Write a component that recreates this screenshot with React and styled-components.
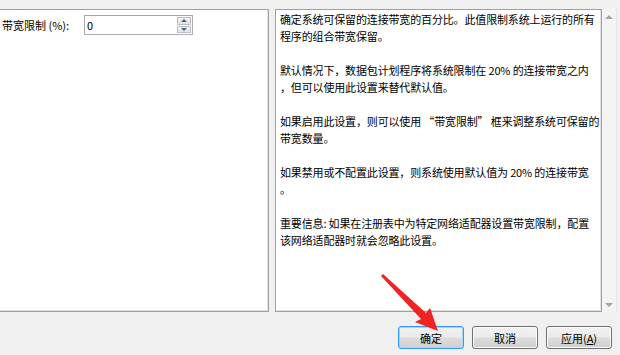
import React from "react";
import styled, { createGlobalStyle } from "styled-components";

const Global = createGlobalStyle`
  html, body { margin: 0; padding: 0; background: #f0f0f0; }
  body { font-family: "Noto Sans CJK SC", "Noto Sans", sans-serif; }
`;

const Page = styled.div`
  position: relative;
  width: 620px;
  height: 355px;
  overflow: hidden;
  background: #f0f0f0;
  display: flex;
  flex-direction: column;
  padding-top: 9px;
  box-sizing: border-box;
  font-size: 11px;
  color: #000;
`;

const Panels = styled.div`
  display: flex;
  gap: 6px;
  height: 303px;
`;

const OptionPanel = styled.div`
  width: 269px;
  box-sizing: border-box;
  background: #fff;
  border: 1px solid #a0a0a0;
  border-left: none;
  box-shadow: inset 0 -1px 0 #e3e3e3, inset -1px 0 0 #e3e3e3;
  padding: 4px 0 0 2px;
`;

const FieldRow = styled.div`
  display: flex;
  align-items: center;
  height: 22px;
`;

const Label = styled.span`
  width: 82px;
  line-height: 14px;
  white-space: nowrap;
`;

const Spin = styled.div`
  width: 109px;
  height: 20px;
  box-sizing: border-box;
  border: 1px solid #abadb3;
  border-top-color: #a8a8a8;
  background: #fff;
  display: flex;
`;

const SpinValue = styled.span`
  flex: 1;
  padding-left: 2px;
  line-height: 18px;
  color: #000;
`;

const SpinButtons = styled.div`
  width: 14px;
  display: flex;
  flex-direction: column;
  gap: 1px;
  padding: 1px 1px 1px 0;
`;

const SpinBtn = styled.div`
  flex: 1;
  background: linear-gradient(#f6f6f6, #e2e2e2);
  border: 1px solid #b8bcc4;
  display: flex;
  align-items: center;
  justify-content: center;
  box-sizing: border-box;
`;

const Tri = styled.span`
  width: 0;
  height: 0;
  border-left: 3px solid transparent;
  border-right: 3px solid transparent;
  ${(p) => (p.$down ? "border-top: 3px solid #4d6185;" : "border-bottom: 3px solid #4d6185;")}
`;

const DescBox = styled.div`
  width: 342px;
  display: flex;
  box-sizing: border-box;
`;

const DescText = styled.div`
  flex: 1;
  background: #fff;
  border: 1px solid #a0a0a0;
  box-shadow: inset -1px -1px 0 #e3e3e3;
  padding: 1px 0 0 4px;
  line-height: 17px;
  white-space: pre;
  letter-spacing: -0.15px;
`;

const Scrollbar = styled.div`
  width: 15px;
  background: #f4f4f4;
  border-right: 1px solid #e6e6e6;
  display: flex;
  flex-direction: column;
  justify-content: space-between;
  align-items: center;
  padding: 6px 0 5px;
  box-sizing: border-box;
`;

const ScrollTri = styled.span`
  width: 0;
  height: 0;
  border-left: 4px solid transparent;
  border-right: 4px solid transparent;
  ${(p) => (p.$down ? "border-top: 4px solid #a6a6a6;" : "border-bottom: 4px solid #a6a6a6;")}
`;

const ButtonRow = styled.div`
  display: flex;
  justify-content: flex-end;
  gap: 8px;
  padding: 14px 8px 0 0;
`;

const Button = styled.div`
  width: 66px;
  height: 23px;
  box-sizing: border-box;
  border: 1px solid ${(p) => (p.$primary ? "#3399ff" : "#707070")};
  border-radius: 3px;
  background: linear-gradient(#f2f2f2 0%, #ebebeb 48%, #dddddd 52%, #cfcfcf 100%);
  box-shadow: inset 0 0 0 1px ${(p) => (p.$primary ? "#9fd8f8" : "#fcfcfc")};
  display: flex;
  align-items: center;
  justify-content: center;
  font-size: 11px;
  color: #000;
`;

const Arrow = styled.svg`
  position: absolute;
  left: 0;
  top: 0;
  pointer-events: none;
`;

const lines = [
  "确定系统可保留的连接带宽的百分比。此值限制系统上运行的所有",
  "程序的组合带宽保留。",
  "",
  "默认情况下，数据包计划程序将系统限制在 20% 的连接带宽之内",
  "，但可以使用此设置来替代默认值。",
  "",
  "如果启用此设置，则可以使用 “带宽限制” 框来调整系统可保留的",
  "带宽数量。",
  "",
  "如果禁用或不配置此设置，则系统使用默认值为 20% 的连接带宽",
  "。",
  "",
  "重要信息: 如果在注册表中为特定网络适配器设置带宽限制，配置",
  "该网络适配器时就会忽略此设置。",
];

export default function App() {
  return (
    <>
      <Global />
      <Page>
        <Panels>
          <OptionPanel>
            <FieldRow>
              <Label>带宽限制 (%):</Label>
              <Spin>
                <SpinValue>0</SpinValue>
                <SpinButtons>
                  <SpinBtn><Tri /></SpinBtn>
                  <SpinBtn><Tri $down /></SpinBtn>
                </SpinButtons>
              </Spin>
            </FieldRow>
          </OptionPanel>
          <DescBox>
            <DescText>{lines.join("\n")}</DescText>
            <Scrollbar>
              <ScrollTri />
              <ScrollTri $down />
            </Scrollbar>
          </DescBox>
        </Panels>
        <ButtonRow>
          <Button $primary>确定</Button>
          <Button>取消</Button>
          <Button>应用(<u>A</u>)</Button>
        </ButtonRow>
        <Arrow width="620" height="355" viewBox="0 0 620 355">
          <path d="M381 276 L383 274 L426 313 L430 308 L438 331 L415 322 L421 319 Z" fill="#f02222" />
        </Arrow>
      </Page>
    </>
  );
}
